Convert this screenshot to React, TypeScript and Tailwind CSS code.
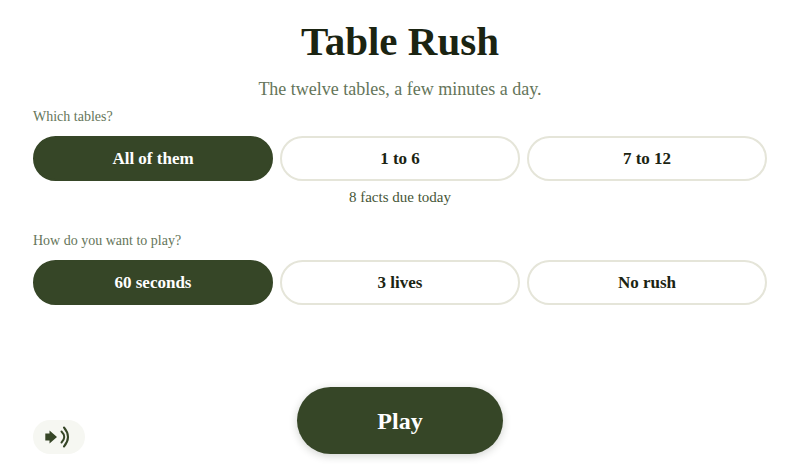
import React, { useState } from 'react';

interface ChoiceGroupProps {
  name: string;
  label: string;
  options: string[];
}

const ChoiceGroup: React.FC<ChoiceGroupProps> = ({ name, label, options }) => {
  const [selected, setSelected] = useState(options[0]);
  const labelId = `${name}-label`;

  return (
    <section>
      <h2 id={labelId} className="text-sm leading-5 text-[#65755a]">{label}</h2>
      <div role="group" aria-labelledby={labelId} className="mt-[9px] grid grid-cols-3 gap-[7px]">
        {options.map((option) => (
          <button
            key={option}
            type="button"
            aria-pressed={selected === option}
            onClick={() => setSelected(option)}
            className={`h-[45px] rounded-full border-2 text-[17px] font-bold ${
              selected === option
                ? 'border-[#364627] bg-[#364627] text-white'
                : 'border-[#e5e5d9] bg-white text-[#1b2412]'
            }`}
          >
            {option}
          </button>
        ))}
      </div>
    </section>
  );
};

const SoundIcon = () => (
  <svg className="h-6 w-7" viewBox="0 0 28 24" fill="none" aria-hidden="true">
    <path d="M0.3 8.5H4.5V5.5L12 12L4.500 18.5V15.5H0.3z" fill="#364627" />
    <path d="M16.500 6.500Q22 12 16.500 17.500" stroke="#364627" strokeWidth="2" strokeLinecap="round" />
    <path d="M19 2.500Q27 12 19 21.500" stroke="#364627" strokeWidth="2" strokeLinecap="round" />
  </svg>
);

const App: React.FC = () => {
  return (
    <main className="flex min-h-screen flex-col bg-white px-[33px] pt-[15px] pb-2.5 font-['Liberation_Serif',serif]">
      <header className="text-center">
        <h1 className="text-[41px] leading-[52px] font-bold text-[#1b2412]">Table Rush</h1>
        <p className="mt-2.5 text-lg leading-6 text-[#65755a]">The twelve tables, a few minutes a day.</p>
      </header>

      <div className="mt-1.5">
        <ChoiceGroup name="tables" label="Which tables?" options={['All of them', '1 to 6', '7 to 12']} />
        <p className="mt-1.5 mb-6 text-center text-[15px] leading-5 text-[#465637]">8 facts due today</p>
        <ChoiceGroup name="mode" label="How do you want to play?" options={['60 seconds', '3 lives', 'No rush']} />
      </div>

      <footer className="mt-auto grid grid-cols-[1fr_auto_1fr] items-end pt-6">
        <button
          type="button"
          aria-label="Sound on"
          className="flex h-[34px] w-[52px] items-center justify-center rounded-full bg-[#f6f7f2]"
        >
          <SoundIcon />
        </button>
        <button
          type="button"
          className="h-[67px] w-[206px] rounded-full bg-[#364627] text-2xl font-bold text-white shadow-[0_2px_8px_rgba(27,36,18,0.2)]"
        >
          Play
        </button>
      </footer>
    </main>
  );
};

export default App;
